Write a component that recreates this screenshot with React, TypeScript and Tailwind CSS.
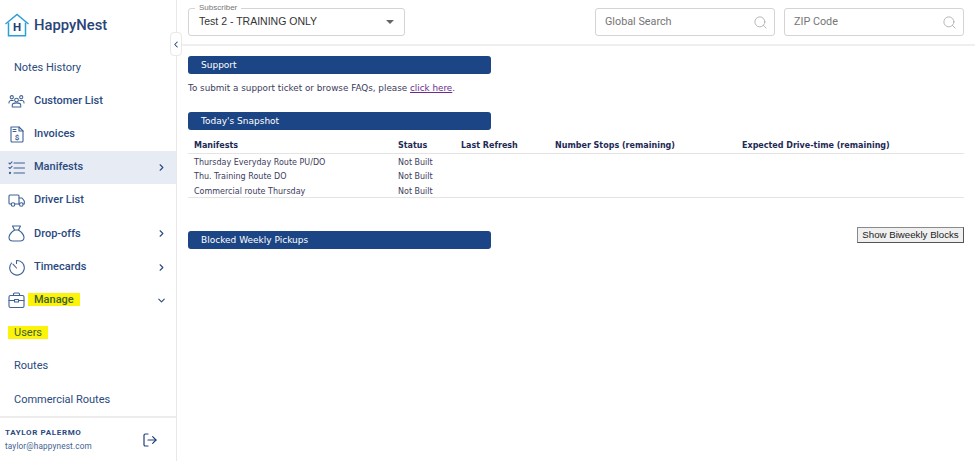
import React from 'react'
import { ChevronLeft, ChevronRight, ChevronDown, Search, LogOut } from 'lucide-react'

const navy = 'text-[#2a4a80]'

function LogoIcon() {
  return (
    <svg width="26" height="24" viewBox="0 0 26 24" fill="none" className="shrink-0">
      <path d="M0.5 11 L12 1.5 L23.5 11" stroke="#2c9fd6" strokeWidth="1.5" />
      <path d="M3.5 9.5 V22.7 H20.5 V9.5" stroke="#2c9fd6" strokeWidth="1.5" />
      <text x="12" y="18" textAnchor="middle" fontSize="11.5" fontWeight="700" fill="#1f3f78" fontFamily="Roboto, sans-serif">H</text>
    </svg>
  )
}

const stroke = { fill: 'none', stroke: '#3f6296', strokeWidth: 1.1, strokeLinecap: 'round', strokeLinejoin: 'round' } as const

function IconUsers() {
  return (
    <svg width="18" height="14" viewBox="0 0 18 14" {...stroke}>
      <circle cx="4" cy="3" r="1.7" />
      <circle cx="14" cy="3" r="1.7" />
      <circle cx="9" cy="6" r="2" />
      <path d="M1 9 C1 6.5 3 6 5.5 6.5" />
      <path d="M17 9 C17 6.5 15 6 12.5 6.5" />
      <path d="M4.5 13.3 V11.5 C4.5 9.5 7 9 9 9 C11 9 13.5 9.5 13.5 11.5 V13.3 Z" />
    </svg>
  )
}

function IconInvoice() {
  return (
    <svg width="14" height="17" viewBox="0 0 14 17" {...stroke}>
      <path d="M1 1 H9 L13 5 V15 Q13 16 12 16 H2 Q1 16 1 15 Z" />
      <path d="M9 1 V5 H13" />
      <path d="M3 3.5 H6 M3 5.5 H6" />
      <text x="7" y="13.5" textAnchor="middle" fontSize="8" fontWeight="700" fill="#3f6296" stroke="none" fontFamily="Roboto, sans-serif">$</text>
    </svg>
  )
}

function IconList() {
  return (
    <svg width="17" height="14" viewBox="0 0 17 14" {...stroke}>
      <path d="M1 2 L2 3 L4 0.8 M1 6.5 L2 7.5 L4 5.3" />
      <circle cx="2" cy="12" r="0.6" />
      <path d="M6 2 H16.5 M6 7 H16.5 M6 12 H16.5" />
    </svg>
  )
}

function IconTruck() {
  return (
    <svg width="17" height="13" viewBox="0 0 17 13" {...stroke}>
      <path d="M3 10 H2 Q1 10 1 9 V2 Q1 1 2 1 H10 Q11 1 11 2 V10 H7" />
      <path d="M11 4 H14 L16.3 7 V10 H15" />
      <path d="M11 10 H11.5" />
      <circle cx="5" cy="10.5" r="1.8" />
      <circle cx="13.3" cy="10.5" r="1.8" />
    </svg>
  )
}

function IconBag() {
  return (
    <svg width="17" height="17" viewBox="0 0 17 17" {...stroke}>
      <path d="M4.5 1 H12.5 L10.5 5 H6.5 Z" />
      <path d="M6.5 5 C3 7.5 1 10 1 12.5 C1 15 3 16 5 16 H12 C14 16 16 15 16 12.5 C16 10 14 7.5 10.5 5" />
    </svg>
  )
}

function IconTimer() {
  return (
    <svg width="17" height="17" viewBox="0 0 17 17" {...stroke}>
      <path d="M3.5 4 A7.3 7.3 0 1 0 8.5 1.5 V4.5" />
      <path d="M5 5.2 L8.5 9" />
    </svg>
  )
}

function IconCase() {
  return (
    <svg width="17" height="16" viewBox="0 0 17 16" {...stroke}>
      <rect x="1" y="3.5" width="15" height="12" rx="1.5" />
      <path d="M5.5 3.5 V2 Q5.5 1 6.5 1 H10.5 Q11.5 1 11.5 2 V3.5" />
      <path d="M1 8.5 H6.5 M10.5 8.5 H16" />
      <rect x="6.5" y="7.5" width="4" height="2.5" />
    </svg>
  )
}

function NavRow({ icon, label, chevron, active, mark, bold = true }: {
  icon?: React.ReactNode
  label: string
  chevron?: 'right' | 'down'
  active?: boolean
  mark?: boolean
  bold?: boolean
}) {
  return (
    <div className={`flex h-[33.2px] items-center pr-[9px] ${icon ? 'pl-2' : 'pl-3.5'} ${active ? 'bg-[#e7ebf3]' : ''}`}>
      {icon && <span className="mr-[9px] flex w-[17px] justify-center">{icon}</span>}
      <span className={`flex-1 text-[11px] ${bold ? 'font-medium' : ''} ${navy}`}>
        {mark ? <span className="-ml-1.5 bg-[#fbf40a] px-1.5 text-[#3d6030]">{label}</span> : label}
      </span>
      {chevron === 'right' && <ChevronRight size={11} strokeWidth={2.4} className="text-[#2a4a80]" />}
      {chevron === 'down' && <ChevronDown size={11} strokeWidth={2.4} className="text-[#2a4a80]" />}
    </div>
  )
}

function Sidebar() {
  return (
    <aside className="relative flex h-[461px] w-[177px] shrink-0 flex-col border-r border-[#e8e8e8] font-['Roboto',sans-serif]">
      <div className="flex h-[51.4px] items-center pb-[1px] pl-[5px]">
        <LogoIcon />
        <span className="ml-[3px] text-[14.8px] font-medium text-[#2a4478]">HappyNest</span>
      </div>
      <div>
        <NavRow label="Notes History" bold={false} />
        <NavRow icon={<IconUsers />} label="Customer List" />
        <NavRow icon={<IconInvoice />} label="Invoices" />
        <NavRow icon={<IconList />} label="Manifests" chevron="right" active />
        <NavRow icon={<IconTruck />} label="Driver List" />
        <NavRow icon={<IconBag />} label="Drop-offs" chevron="right" />
        <NavRow icon={<IconTimer />} label="Timecards" chevron="right" />
        <NavRow icon={<IconCase />} label="Manage" chevron="down" mark />
        <NavRow label="Users" bold={false} mark />
        <NavRow label="Routes" bold={false} />
        <NavRow label="Commercial Routes" bold={false} />
      </div>
      <div className="flex flex-1 items-center border-t-2 border-[#ececec] pl-[5px] pr-[18px]">
        <div className="flex-1">
          <div className={`text-[8px] font-bold leading-[10px] tracking-[0.65px] ${navy}`}>TAYLOR PALERMO</div>
          <div className="mt-[3px] text-[8.2px] leading-[10px] tracking-[0.15px] text-[#3f5f8f]">taylor@happynest.com</div>
        </div>
        <LogOut size={16} strokeWidth={1.8} className="text-[#1f3f78]" />
      </div>
      {/* collapse handle sits across the sidebar edge */}
      <div className="absolute left-[170px] top-[32px] flex h-[24px] w-[12px] items-center justify-center rounded border border-[#e8e8e8] bg-white">
        <ChevronLeft size={11} strokeWidth={2.5} className="text-[#1f3f78]" />
      </div>
    </aside>
  )
}

function SearchBox({ placeholder }: { placeholder: string }) {
  return (
    <div className="flex h-[28px] w-[180px] items-center justify-between rounded-[3px] border border-[#d4d4d4] pl-[9px] pr-[6px] font-['Roboto',sans-serif] text-[10.8px] text-[#757575]">
      <span>{placeholder}</span>
      <Search size={15} strokeWidth={1.3} className="text-[#a8a8a8]" />
    </div>
  )
}

function SectionBar({ title }: { title: string }) {
  return (
    <div className="flex h-[18px] w-[303px] items-center rounded-[3px] bg-[#1b4585] pl-[13px] font-['DejaVu_Sans',sans-serif] text-[9px] leading-none text-white">
      {title}
    </div>
  )
}

const rows = ['Thursday Everyday Route PU/DO', 'Thu. Training Route DO', 'Commercial route Thursday']

function Snapshot() {
  const head = 'pb-px text-left font-bold leading-[12px] text-[#1d2a55]'
  return (
    <table className="mt-[10px] w-[776px] table-fixed border-b border-[#e4e4e4] font-['DejaVu_Sans',sans-serif] text-[8px] leading-[11.4px] text-[#3c3c5c]">
      <thead>
        <tr className="border-b border-[#e4e4e4]">
          <th className={`${head} w-[210px] pl-1.5`}>Manifests</th>
          <th className={`${head} w-[63px]`}>Status</th>
          <th className={`${head} w-[94px]`}>Last Refresh</th>
          <th className={`${head} w-[187px]`}>Number Stops (remaining)</th>
          <th className={head}>Expected Drive-time (remaining)</th>
        </tr>
      </thead>
      <tbody>
        {rows.map((r) => (
          <tr key={r}>
            <td className="pl-1.5 pt-[3px]">{r}</td>
            <td className="pt-[3px]">Not Built</td>
            <td />
            <td />
            <td />
          </tr>
        ))}
      </tbody>
    </table>
  )
}

export default function App() {
  return (
    <div className="flex h-[461px] w-[975px] overflow-hidden bg-white">
      <Sidebar />
      <main className="flex-1">
        <header className="flex h-[46px] items-start border-b-2 border-[#efefef] pl-[11px] pr-[11px] pt-2">
          <div className="relative flex h-[28px] w-[217px] items-center justify-between rounded-[3px] border border-[#d4d4d4] pl-[10px] pr-[10px] font-['Liberation_Sans',sans-serif] text-[10.5px] text-[#333]">
            <span className="absolute -top-[6px] left-[6px] bg-white px-[4px] text-[8px] leading-[9px] text-[#777]">Subscriber</span>
            <span>Test 2 - TRAINING ONLY</span>
            <span className="h-0 w-0 border-x-[4px] border-t-[4px] border-x-transparent border-t-[#666]" />
          </div>
          <div className="ml-auto flex gap-[9px]">
            <SearchBox placeholder="Global Search" />
            <SearchBox placeholder="ZIP Code" />
          </div>
        </header>
        <div className="pl-[11px] pr-[11px] pt-[10px]">
          <SectionBar title="Support" />
          <p className="mt-[9px] font-['DejaVu_Sans',sans-serif] text-[8.8px] leading-[11px] text-[#3c3c5c]">
            To submit a support ticket or browse FAQs, please{' '}
            <a className="text-[#6b2c91] underline">click here</a>.
          </p>
          <div className="mt-[18px]">
            <SectionBar title="Today's Snapshot" />
          </div>
          <Snapshot />
          <div className="mt-[33px] flex items-start justify-between">
            <SectionBar title="Blocked Weekly Pickups" />
            <button className="-mt-[4px] h-[16px] w-[107px] border border-[#8a8a8a] border-b-[#555] border-r-[#555] bg-[#f0f0f0] font-['Liberation_Sans',sans-serif] text-[9.7px] leading-none text-[#222]">
              Show Biweekly Blocks
            </button>
          </div>
        </div>
      </main>
    </div>
  )
}
